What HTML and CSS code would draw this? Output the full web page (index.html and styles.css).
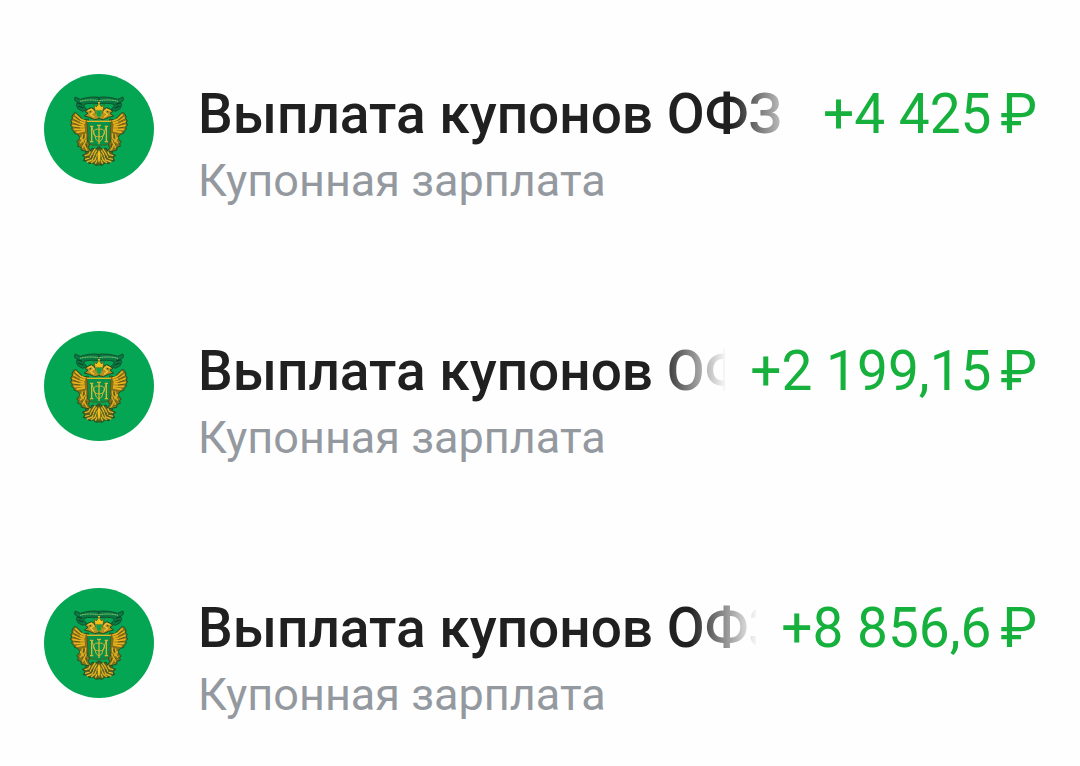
FILE: index.html
```html
<!DOCTYPE html>
<html lang="ru">
  <head>
    <meta charset="utf-8">
    <meta name="viewport" content="width=device-width, initial-scale=1">
    <title>Выплата купонов</title>
    <link rel="stylesheet" href="styles.css">
  </head>
  <body>

    <!-- emblem, drawn once and reused by every row -->
    <svg class="sprite" aria-hidden="true">
      <defs>
        <g id="half">
          <!-- ribbon -->
          <path d="M177 82C158 79 136 83 121 88L105 81L104 91L112 97L109 106L115 117L128 124L140 118L132 109L132 103C146 99 160 99 177 101Z" fill="#097a43" stroke="#12502d" stroke-width="3"/>
          <path d="M120 94C139 89 157 89 177 92" fill="none" stroke="#86c96c" stroke-width="3" stroke-dasharray="4 1"/>
          <path d="M112 98L126 103M115 108L130 114" stroke="#0f4227" stroke-width="4"/>
          <!-- wing -->
          <path d="M145 147L129 150L122 141L114 134L106 126L100 132L96 139L97 147L92 151L95 159L91 165L97 171L95 178L102 184L103 190L113 193L119 201L117 209L110 215L115 221L113 229L123 232L124 241L135 243L144 253L152 244L145 233L149 222L142 213L145 200Z" fill="#8a7018" stroke="#1c5527" stroke-width="3"/>
          <path d="M106 133L120 147L137 154M100 142L116 154L135 160M97 154L115 162L133 166M97 166L116 170L134 171M101 178L118 178L135 177M109 187L121 185L135 182" fill="none" stroke="#e9b31f" stroke-width="5"/>
          <path d="M108 141L121 151M103 149L120 157M101 160L118 166M104 172L120 174" fill="none" stroke="#4d4713" stroke-width="2"/>
          <path d="M128 193L125 207L131 217L128 234M137 191L136 204L120 220M139 209L132 223L142 243M120 202L128 213" fill="none" stroke="#ddb021" stroke-width="4"/>
          <path d="M132 195L131 206M134 214L126 226M138 222L141 232" fill="none" stroke="#243f1a" stroke-width="2"/>
          <!-- head and neck -->
          <path d="M177 146L164 149L148 142L133 138L144 130L135 124L145 117L154 113L163 118L167 128L177 141Z" fill="#b58f20" stroke="#1b4b22" stroke-width="3"/>
          <path d="M143 123L154 118L162 126L151 133L162 142" fill="none" stroke="#f2c337" stroke-width="4"/>
          <circle cx="151" cy="125" r="2" fill="#26401b"/>
          <!-- lower branch -->
          <path d="M177 284L167 286L160 279L147 281L142 274L130 272L135 263L127 256L138 251L137 243L149 246L156 234L165 238L177 231Z" fill="#5f5d1a" stroke="#185228" stroke-width="3"/>
          <path d="M135 268L150 264L157 249L166 236M140 276L157 270L164 251L170 241M153 279L165 270L171 251M134 257L146 254L151 244M166 281L173 268L174 249" fill="none" stroke="#dfb628" stroke-width="4"/>
          <path d="M145 262L154 266M153 257L161 264M162 256L168 262" stroke="#174422" stroke-width="2"/>
        </g>
        <symbol id="emblem" viewBox="12 12 330 330">
          <circle cx="177" cy="177" r="165" fill="#05a653"/>
          <use href="#half"/>
          <use href="#half" transform="matrix(-1 0 0 1 354 0)"/>
          <!-- crown -->
          <path d="M162 103L169 111L177 99L185 111L192 103L189 122H165Z" fill="#f5bf1c" stroke="#315020" stroke-width="2"/>
          <path d="M167 121H187L184 138L177 143L170 138Z" fill="#12a04a" stroke="#b99a22" stroke-width="2"/>
          <circle cx="177" cy="98" r="3" fill="#f1c52d"/>
          <!-- shield with monogram -->
          <path d="M141 154H213L209 219L197 225H185L177 232L169 225H157L145 219Z" fill="#079049" stroke="#4e5c1c" stroke-width="3"/>
          <path d="M141 154H213" stroke="#e3b726" stroke-width="4"/>
          <g fill="none" stroke="#d6b633" stroke-width="4">
            <path d="M155 169V215M199 169V215M150 169H160M194 169H204M150 215H160M194 215H204M177 165V222M171 166H183"/>
            <path d="M177 178C155 172 155 203 177 200C199 203 199 172 177 178Z" stroke-width="3"/>
            <path d="M155 169L169 210L177 216L185 210L199 169" stroke-width="3"/>
          </g>
          <path d="M177 236L171 250L173 271L177 286L181 271L183 250Z" fill="#f1bd20" stroke="#3c541c" stroke-width="2"/>
        </symbol>
      </defs>
    </svg>

    <ul class="operations">
      <li class="operation">
        <svg class="operation-logo" aria-hidden="true"><use href="#emblem"/></svg>
        <div class="operation-info">
          <div class="operation-row">
            <span class="operation-title">Выплата купонов ОФЗ 2</span>
            <span class="operation-amount">+4 425<span class="currency">₽</span></span>
          </div>
          <div class="operation-account">Купонная зарплата</div>
        </div>
      </li>
      <li class="operation">
        <svg class="operation-logo" aria-hidden="true"><use href="#emblem"/></svg>
        <div class="operation-info">
          <div class="operation-row">
            <span class="operation-title">Выплата купонов ОФЗ</span>
            <span class="operation-amount">+2 199,15<span class="currency">₽</span></span>
          </div>
          <div class="operation-account">Купонная зарплата</div>
        </div>
      </li>
      <li class="operation">
        <svg class="operation-logo" aria-hidden="true"><use href="#emblem"/></svg>
        <div class="operation-info">
          <div class="operation-row">
            <span class="operation-title">Выплата купонов ОФЗ</span>
            <span class="operation-amount">+8 856,6<span class="currency">₽</span></span>
          </div>
          <div class="operation-account">Купонная зарплата</div>
        </div>
      </li>
    </ul>

  </body>
</html>
```
FILE: styles.css
```css
body {
  margin: 0;
  background: #fefefe;
  font-family: Roboto, "Liberation Sans", sans-serif;
}

.sprite {
  position: absolute;
  width: 0;
  height: 0;
}

.operations {
  display: flex;
  flex-direction: column;
  gap: 124px;
  margin: 0;
  padding: 74px 43px 32px 44px;
  list-style: none;
}

.operation {
  display: flex;
  align-items: flex-start;
  gap: 44px;
}
.operation-logo {
  flex: none;
  width: 110px;
  height: 110px;
}
.operation-info {
  flex: 1;
  min-width: 0;
  padding-top: 8px;
}
.operation-row {
  display: flex;
  gap: 25px;
  margin-bottom: 9px;
  font-size: 55px;
  line-height: 64px;
  white-space: nowrap;
}
.operation-title {
  flex: 1;
  min-width: 0;
  overflow: hidden;
  color: #202020;
  font-weight: 500;
  -webkit-mask-image: linear-gradient(to left, rgba(0, 0, 0, 0.04), #000 66px);
  mask-image: linear-gradient(to left, rgba(0, 0, 0, 0.04), #000 66px);
}
.operation-amount {
  flex: none;
  color: #16b03c;
}
.currency {
  margin-left: 9px;
}
.operation-account {
  color: #9499a0;
  font-size: 45px;
  line-height: 52px;
}
```
